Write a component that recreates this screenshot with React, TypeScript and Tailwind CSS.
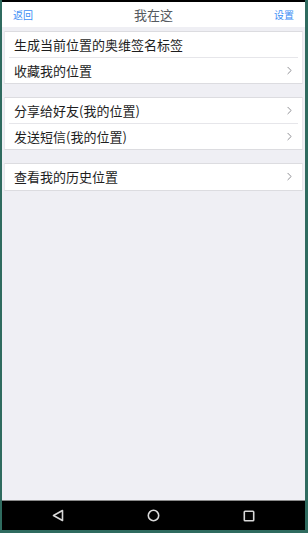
import { ChevronRight } from "lucide-react";

const font = { fontFamily: '"Noto Sans CJK SC", "Liberation Sans", sans-serif' };

function Row({ label, arrow = true, last = false }: { label: string; arrow?: boolean; last?: boolean }) {
    return (
        <div className="relative flex h-[25.5px] items-center justify-between pl-[9px] pr-[6px]">
            <span className="text-[13px] leading-none text-[#1e1e1e]">{label}</span>
            {arrow && <ChevronRight className="h-[13px] w-[13px] text-[#8e8e93]" strokeWidth={1.8} />}
            {!last && <div className="absolute bottom-0 left-[4px] right-[4px] h-px bg-[#e6e6ea]"></div>}
        </div>
    );
}

function Group({ children }: { children: React.ReactNode }) {
    return (
        <div className="mx-[2px] border-y border-[#dcdce0] border-x border-x-[#e8e8ec] bg-white">
            {children}
        </div>
    );
}

export default function App() {
    return (
        <div className="flex h-[533px] w-[308px] flex-col bg-[#2f6b5f] pb-[3px] pl-[2px] pr-[3px]" style={font}>
            <div className="flex flex-1 flex-col bg-[#efeff4]">
                <div className="h-[2px] bg-black"></div>
                {/* Nav bar */}
                <div className="flex h-[25px] items-center justify-between bg-white px-[11px]">
                    <span className="text-[10px] text-[#3d8ef5]">返回</span>
                    <span className="text-[13px] text-[#555a60]">我在这</span>
                    <span className="text-[10px] text-[#3d8ef5]">设置</span>
                </div>

                <div className="flex flex-col gap-[13px] pt-[4px]">
                    <Group>
                        <Row label="生成当前位置的奥维签名标签" arrow={false} />
                        <Row label="收藏我的位置" last />
                    </Group>
                    <Group>
                        <Row label="分享给好友(我的位置)" />
                        <Row label="发送短信(我的位置)" last />
                    </Group>
                    <Group>
                        <Row label="查看我的历史位置" last />
                    </Group>
                </div>

                <div className="flex-1"></div>
                <div className="h-px bg-[#8a8a8a]"></div>
                {/* Android nav */}
                <div className="flex h-[29px] items-center justify-between bg-black pl-[50px] pr-[50px]">
                    <svg width="12" height="13" viewBox="0 0 12 13" fill="none" stroke="#d8d8d8" strokeWidth="1.6">
                        <path d="M10.5 1.5 L1.5 6.5 L10.5 11.5 Z" strokeLinejoin="round" />
                    </svg>
                    <svg width="13" height="13" viewBox="0 0 13 13" fill="none" stroke="#d8d8d8" strokeWidth="1.6">
                        <circle cx="6.5" cy="6.5" r="5.2" />
                    </svg>
                    <svg width="12" height="12" viewBox="0 0 12 12" fill="none" stroke="#d8d8d8" strokeWidth="1.6">
                        <rect x="1.3" y="1.3" width="9.4" height="9.4" rx="0.8" />
                    </svg>
                </div>
            </div>
        </div>
    );
}
